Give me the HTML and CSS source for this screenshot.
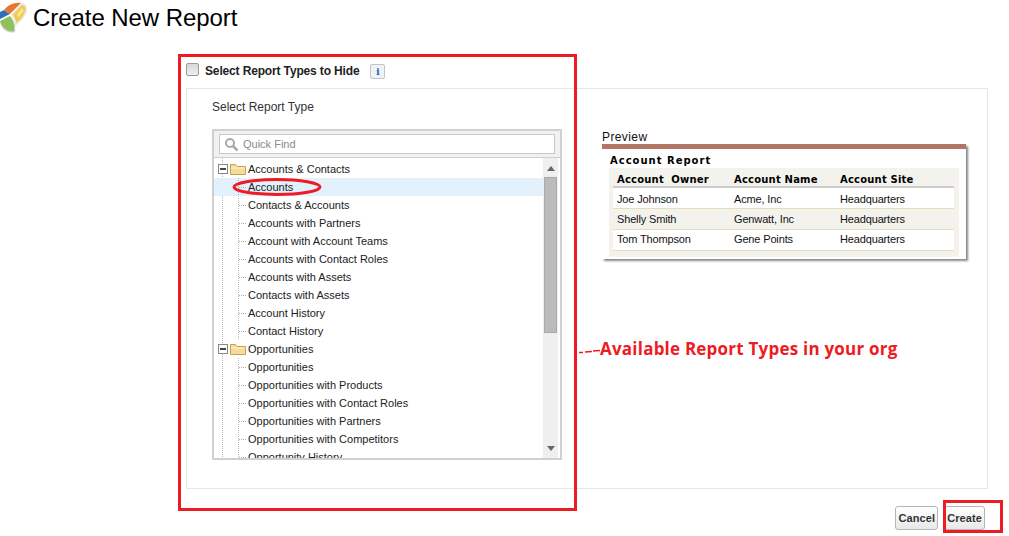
FILE: index.html
```html
<!DOCTYPE html>
<html lang="en">
<head>
  <meta charset="UTF-8" />
  <title>Create New Report</title>
  <link rel="stylesheet" href="styles.css">
</head>
<body>

  <div class="page-header">
    <svg class="page-icon" width="27" height="33" viewBox="0 0 27 33">
      <path d="M0 22 L11 17 C14 21 16 26 15 32 C8 34 2 30 0 22 Z" fill="#cfcfcf"/>
      <path d="M0 21 L10 16 C13 20 15 25 14 31 C8 32 2 28 0 21 Z" fill="#8fc25a"/>
      <path d="M0 12 L4 10 L10 14 L0 19 Z" fill="#2f6fb5"/>
      <path d="M4 10 C8 5 14 2 21 3 L10 14 Z" fill="#e8772e"/>
      <path d="M11 15 L22 3 C26 4 27 7 27 10 C26 16 20 23 15 26 C15 22 14 18 11 15 Z" fill="#e6e6df"/>
      <path d="M13 15 L22 5 C25 6 26 8 25 11 C24 15 20 20 16 23 C16 20 15 17 13 15 Z" fill="#f2c94a"/>
      <path d="M17 14 L22 8 C23 9 24 10 23 12 L18 18 Z" fill="#f9e58a"/>
    </svg>
    <h1 class="page-title">Create New Report</h1>
  </div>

  <div class="main-content">
    <div class="hide-row">
      <span class="checkbox"></span>
      <span class="hide-label">Select Report Types to Hide</span>
      <span class="info-btn">i</span>
    </div>

    <div class="panel">
      <div class="picker">
        <div class="picker-label">Select Report Type</div>
        <div class="listbox">
          <div class="search-bar">
            <div class="search-input">
              <svg width="15" height="15" viewBox="0 0 15 15">
                <circle cx="6" cy="6" r="4" fill="none" stroke="#aaa" stroke-width="2"/>
                <path d="M9 9 L13.5 13.5" stroke="#aaa" stroke-width="2.5"/>
              </svg>
              <span>Quick Find</span>
            </div>
          </div>
          <div class="list-body">
            <div class="tree">
              <div class="group"><span class="toggle"></span><svg class="folder" width="16" height="12" viewBox="0 0 16 12"><path d="M.5 11.5V1.5h5l1.500 2h8.500v8z" fill="#f6dc9c" stroke="#c9a04e"/><path d="M1 5h14" stroke="#fff3cf"/></svg>Accounts &amp; Contacts</div>
              <div class="item selected">Accounts</div>
              <div class="item">Contacts &amp; Accounts</div>
              <div class="item">Accounts with Partners</div>
              <div class="item">Account with Account Teams</div>
              <div class="item">Accounts with Contact Roles</div>
              <div class="item">Accounts with Assets</div>
              <div class="item">Contacts with Assets</div>
              <div class="item">Account History</div>
              <div class="item">Contact History</div>
              <div class="group"><span class="toggle"></span><svg class="folder" width="16" height="12" viewBox="0 0 16 12"><path d="M.5 11.5V1.5h5l1.500 2h8.500v8z" fill="#f6dc9c" stroke="#c9a04e"/><path d="M1 5h14" stroke="#fff3cf"/></svg>Opportunities</div>
              <div class="item">Opportunities</div>
              <div class="item">Opportunities with Products</div>
              <div class="item">Opportunities with Contact Roles</div>
              <div class="item">Opportunities with Partners</div>
              <div class="item">Opportunities with Competitors</div>
              <div class="item">Opportunity History</div>
            </div>
            <div class="scrollbar">
              <span class="arrow-up"></span>
              <span class="thumb"></span>
              <span class="arrow-down"></span>
            </div>
          </div>
        </div>
      </div>

      <div class="preview">
        <div class="preview-label">Preview</div>
        <div class="preview-card">
          <div class="preview-title">Account Report</div>
          <div class="preview-box">
            <table class="preview-table">
              <tr><th>Account&nbsp; Owner</th><th>Account Name</th><th>Account Site</th></tr>
              <tr class="first"><td>Joe Johnson</td><td>Acme, Inc</td><td>Headquarters</td></tr>
              <tr class="alt"><td>Shelly Smith</td><td>Genwatt, Inc</td><td>Headquarters</td></tr>
              <tr class="last"><td>Tom Thompson</td><td>Gene Points</td><td>Headquarters</td></tr>
            </table>
          </div>
        </div>
      </div>
    </div>

    <div class="buttons">
      <button class="btn">Cancel</button>
      <button class="btn">Create</button>
    </div>
  </div>

  <!-- red markup drawn on top of the screenshot -->
  <div class="mark mark-list"></div>
  <div class="mark mark-create"></div>
  <svg class="mark-oval" width="92" height="22" viewBox="0 0 92 22">
    <ellipse cx="46" cy="11" rx="43" ry="7.500" fill="none" stroke="#ed1c24" stroke-width="3"/>
  </svg>
  <div class="note">
    <svg class="note-dash" width="21" height="6" viewBox="0 0 21 6">
      <path d="M0 4.500 L4 4.500 M6 4 L13 3.500 M14 3 L21 2.500" stroke="#ed1c24" stroke-width="1.500" fill="none"/>
    </svg>
    Available Report Types in your org
  </div>

</body>
</html>
```

FILE: styles.css
```css
html, body {
  margin: 0;
  padding: 0;
  height: 100%;
  overflow: hidden;
  background: #fff;
  font-family: "Liberation Sans", Arial, sans-serif;
  color: #222;
}
body {
  position: relative;
}
.page-header {
  display: flex;
  align-items: flex-start;
  gap: 6px;
  height: 64px;
}
.page-icon {
  flex: none;
}
.page-title {
  margin: 4px 0 0;
  font-size: 24px;
  line-height: 28px;
  font-weight: normal;
  letter-spacing: -0.06px;
  color: #000;
}
.main-content {
  margin: 0 21px 0 186px;
}
.hide-row {
  display: flex;
  align-items: center;
  height: 14px;
  margin-bottom: 10px;
}
.checkbox {
  width: 11px;
  height: 11px;
  margin: -3px 6px 0 0;
  border: 1px solid #999;
  border-radius: 2px;
  background: linear-gradient(#d8d8d8, #efefef);
}
.hide-label {
  font-size: 12px;
  font-weight: bold;
  letter-spacing: -0.15px;
  color: #222;
  margin-right: 11px;
}
.info-btn {
  width: 13px;
  height: 13px;
  border: 1px solid #c4c4c4;
  border-radius: 2px;
  background: #eef3f8;
  color: #2a6cb0;
  font: bold 10px/13px "DejaVu Serif", serif;
  text-align: center;
}
.panel {
  display: flex;
  height: 399px;
  border: 1px solid #e6e6e6;
}
.picker {
  width: 390px;
  padding: 11px 0 0 25px;
  flex: none;
}
.picker-label {
  font-size: 12px;
  line-height: 14px;
  color: #333;
  margin-bottom: 15px;
}
.listbox {
  width: 346px;
  height: 327px;
  border: 2px solid #d0d0d0;
  display: flex;
  flex-direction: column;
}
.search-bar {
  background: #f1f1f1;
  padding: 3px 5px;
  border-bottom: 1px solid #d0d0d0;
}
.search-input {
  display: flex;
  align-items: center;
  gap: 4px;
  height: 18px;
  padding-left: 4px;
  border: 1px solid #c8c8c8;
  background: #fff;
  font-size: 11px;
  color: #8a8a8a;
}
.list-body {
  flex: 1;
  display: flex;
  min-height: 0;
}
.tree {
  flex: 1;
  overflow: hidden;
  padding-top: 2px;
  font-size: 11px;
  background: repeating-linear-gradient(#bbb 0 1px, transparent 1px 2px) 8px 0 / 1px 100% no-repeat;
}
.group {
  display: flex;
  align-items: center;
  height: 18px;
  padding-left: 4px;
  color: #222;
}
.toggle {
  position: relative;
  width: 8px;
  height: 8px;
  border: 1px solid #888;
  background: #fff;
  margin-right: 2px;
}
.toggle::after {
  content: "";
  position: absolute;
  left: 1px;
  right: 1px;
  top: 3px;
  height: 2px;
  background: #444;
}
.folder {
  margin-right: 2px;
}
.item {
  height: 18px;
  line-height: 18px;
  padding-left: 34px;
  color: #222;
  background:
    repeating-linear-gradient(90deg, #aaa 0 1px, transparent 1px 2px) 25px 9px / 7px 1px no-repeat,
    repeating-linear-gradient(#bbb 0 1px, transparent 1px 2px) 24px 0 / 1px 100% no-repeat;
}
.item.selected {
  background-color: #e3f1fc;
}
.scrollbar {
  flex: none;
  width: 15px;
  margin-right: 2px;
  background: #efefef;
  display: flex;
  flex-direction: column;
  align-items: center;
}
.arrow-up, .arrow-down {
  width: 0;
  height: 0;
  border-left: 4px solid transparent;
  border-right: 4px solid transparent;
}
.arrow-up {
  border-bottom: 5px solid #666;
  margin: 8px 0 6px;
}
.arrow-down {
  border-top: 5px solid #666;
  margin-top: 113px;
}
.thumb {
  width: 13px;
  height: 156px;
  background: #bbb;
  border: 1px solid #aaa;
  box-sizing: border-box;
}
.preview {
  padding-top: 41px;
  width: 365px;
}
.preview-label {
  font-size: 12px;
  line-height: 14px;
  letter-spacing: 0.4px;
  color: #111;
}
.preview-card {
  height: 106px;
  width: 350px;
  padding: 4px 7px 0;
  border-top: 5px solid #b07565;
  background: #fff;
  box-shadow: 2px 2px 2px #888;
}
.preview-title {
  padding: 1px 0 0 1px;
  font: bold 10px/14px "DejaVu Sans", Verdana, sans-serif;
  letter-spacing: 1px;
  color: #000;
}
.preview-box {
  height: 89px;
  padding: 0 5px 0 4px;
  box-sizing: border-box;
  background: #f3f2ec;
}
.preview-table {
  width: 341px;
  border-collapse: collapse;
  font-size: 11px;
  letter-spacing: -0.15px;
  color: #111;
  table-layout: fixed;
}
.preview-table th {
  height: 14px;
  padding: 4px 0 0 4px;
  text-align: left;
  font: bold 10px "DejaVu Sans", Verdana, sans-serif;
  letter-spacing: 0.2px;
  border-bottom: 2px solid #ccc;
  color: #000;
}
.preview-table th:nth-child(1) { width: 113px; }
.preview-table th:nth-child(2) { width: 102px; }
.preview-table td {
  height: 20px;
  padding: 0 0 0 4px;
  background: #fff;
  border-bottom: 1px solid #e3dfb8;
}
.preview-table tr.first td {
  height: 18px;
  padding-top: 2px;
}
.preview-table tr.last td {
  height: 18px;
  padding-bottom: 2px;
}
.preview-table tr.alt td {
  background: #f3f2ec;
}
.buttons {
  display: flex;
  justify-content: flex-end;
  gap: 6px;
  margin: 17px 3px 0 0;
}
.btn {
  height: 24px;
  padding: 0 2px;
  min-width: 40px;
  border: 1px solid #b5b5b5;
  border-radius: 3px;
  background: linear-gradient(#fff, #e8e8e8);
  font: bold 11px "Liberation Sans", Arial, sans-serif;
  letter-spacing: 0.1px;
  color: #333;
}
.mark {
  position: absolute;
  border: 3px solid #ed1c24;
  box-sizing: border-box;
  pointer-events: none;
}
.mark-list {
  left: 178px;
  top: 54px;
  width: 399px;
  height: 457px;
}
.mark-create {
  left: 943px;
  top: 500px;
  width: 60px;
  height: 33px;
}
.mark-oval {
  position: absolute;
  left: 231px;
  top: 176px;
}
.note {
  position: absolute;
  left: 579px;
  top: 337px;
  display: flex;
  align-items: center;
  font: bold 17px/24px "Open Sans", sans-serif;
  letter-spacing: 0.22px;
  color: #ed1c24;
}
.note-dash {
  margin-top: 3px;
}
```
